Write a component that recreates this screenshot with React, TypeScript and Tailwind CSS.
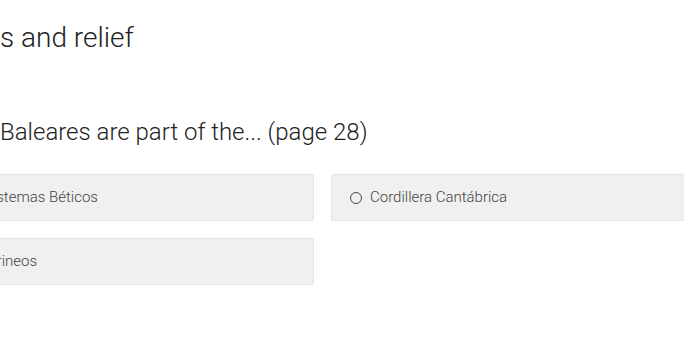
const options = ["Sistemas Béticos", "Cordillera Cantábrica", "Pirineos"];

function Option({ label }: { label: string }) {
  return (
    <label className="flex items-center h-[47px] pl-[18px] bg-[#f0f0f0] border border-[#e4e4e4] rounded-[2px] cursor-pointer">
      <span className="w-[12px] h-[12px] rounded-full border border-[#444] shrink-0" />
      <span className="ml-[8px] text-[15px] font-light text-[#444] whitespace-nowrap">{label}</span>
    </label>
  );
}

export default function App() {
  return (
    <main
      className="w-[684px] h-[359px] overflow-hidden bg-white"
      style={{ fontFamily: "Roboto, 'Noto Sans', sans-serif" }}
    >
      <div className="-ml-[55px] w-[755px]">
        <h2 className="flex pl-[55px] pt-[19px] h-[38px] text-[28px] leading-[38px] font-light text-[#222]">
          <span className="w-0 flex justify-end whitespace-nowrap">Coast</span>
          <span className="whitespace-nowrap">s and relief</span>
        </h2>
        <h3 className="flex pl-[55px] mt-[78px] text-[24px] leading-[32px] font-light text-[#222]">
          <span className="w-0 flex justify-end whitespace-nowrap">The Islas&nbsp;</span>
          <span className="whitespace-nowrap">Baleares are part of the... (page 28)</span>
        </h3>
        <div className="grid grid-cols-2 gap-[17px] mt-[26px]">
          {options.map((o) => (
            <Option key={o} label={o} />
          ))}
        </div>
      </div>
    </main>
  );
}
